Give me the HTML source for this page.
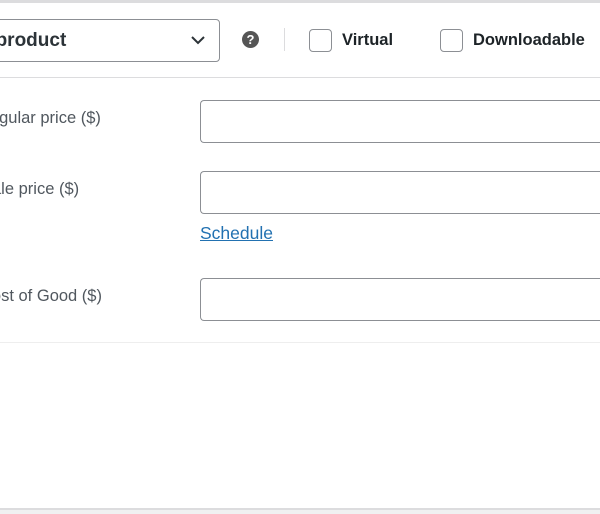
<!DOCTYPE html>
<html><head><style>
html,body{margin:0;width:600px;height:514px;overflow:hidden}
body{background:#fff;position:relative;font-family:"Liberation Sans",sans-serif;color:#3c434a}
#w{position:absolute;left:0;top:0;width:600px;height:514px;overflow:hidden}
.a{position:absolute}
.inp{position:absolute;left:200px;width:400px;height:43px;border:1px solid #8c8f94;border-right:none;border-radius:4px 0 0 4px;box-sizing:border-box;background:#fff}
.lbl{position:absolute;font-size:16.5px;color:#50575e;white-space:nowrap}
.cb{position:absolute;top:29px;width:23px;height:23px;border:1px solid #8c8f94;border-radius:4px;box-sizing:border-box}
.ct{position:absolute;top:31px;font-size:16.5px;color:#1d2327;font-weight:bold}
</style></head><body><div id="w">
<div class="a" style="left:0;top:0;width:600px;height:3px;background:#dcdcde"></div>
<div class="a" style="left:-60px;top:19px;width:280px;height:43px;border:1px solid #8c8f94;border-radius:4px;box-sizing:border-box"></div>
<div class="a" style="left:-72px;top:30px;font-size:19px;font-weight:bold;color:#2c3338;white-space:nowrap">Simple product</div>
<svg class="a" style="left:190px;top:34px" width="16" height="12" viewBox="0 0 16 12"><path d="M2 3l6 6 6-6" fill="none" stroke="#2c3338" stroke-width="2"/></svg>
<div class="a" style="left:242px;top:31px;width:17px;height:17px;border-radius:50%;background:#555;color:#fff;font-size:13px;font-weight:bold;text-align:center;line-height:17px">?</div>
<div class="a" style="left:284px;top:28px;width:1px;height:23px;background:#dcdcde"></div>
<div class="cb" style="left:309px"></div><div class="ct" style="left:342px">Virtual</div>
<div class="cb" style="left:440px"></div><div class="ct" style="left:473px">Downloadable</div>
<div class="a" style="left:0;top:77px;width:600px;height:1px;background:#dcdcde"></div>
<div class="lbl" style="left:-22px;top:109px">Regular price ($)</div>
<div class="inp" style="top:100px"></div>
<div class="lbl" style="left:-19px;top:180px">Sale price ($)</div>
<div class="inp" style="top:171px"></div>
<div class="a" style="left:200px;top:223px;font-size:17.5px;color:#2271b1;text-decoration:underline">Schedule</div>
<div class="lbl" style="left:-20px;top:287px">Cost of Good ($)</div>
<div class="inp" style="top:278px"></div>
<div class="a" style="left:0;top:342px;width:600px;height:1px;background:#eee"></div>
<div class="a" style="left:0;top:508px;width:600px;height:2px;background:#dcdcde"></div>
<div class="a" style="left:0;top:510px;width:600px;height:4px;background:#f0f0f1"></div>
</div></body></html>
